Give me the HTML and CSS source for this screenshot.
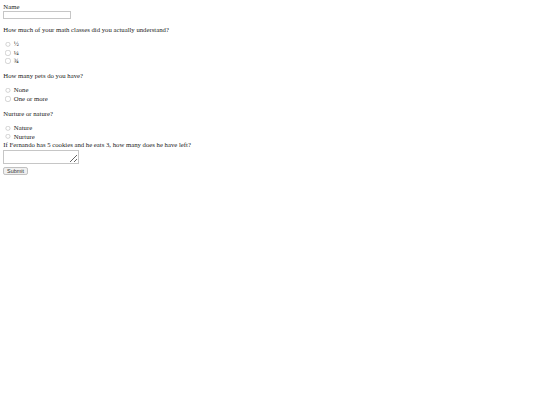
FILE: index.html
```html
<!DOCTYPE html>
<html>
<head>
<meta charset="utf-8">
<title>Quiz</title>
<link rel="stylesheet" href="styles.css">
</head>
<body class="page">
<form class="quiz">
  <label class="field-label" for="name">Name</label>
  <input class="text-input" type="text" id="name" name="name">
  <p class="question">How much of your math classes did you actually understand?</p>
  <label class="option"><input class="radio" type="radio" name="math" value="half"> ½</label>
  <label class="option"><input class="radio" type="radio" name="math" value="quarter"> ¼</label>
  <label class="option"><input class="radio" type="radio" name="math" value="three"> ¾</label>
  <p class="question">How many pets do you have?</p>
  <label class="option"><input class="radio" type="radio" name="pets" value="none"> None</label>
  <label class="option"><input class="radio" type="radio" name="pets" value="some"> One or more</label>
  <p class="question">Nurture or nature?</p>
  <label class="option"><input class="radio" type="radio" name="nn" value="nature"> Nature</label>
  <label class="option"><input class="radio" type="radio" name="nn" value="nurture"> Nurture</label>
  <label class="field-label" for="cookies">If Fernando has 5 cookies and he eats 3, how many does he have left?</label>
  <textarea class="answer" id="cookies" name="cookies"></textarea>
  <input class="submit" type="submit" value="Submit">
</form>
</body>
</html>
```
FILE: styles.css
```css
html, body { margin: 0; padding: 0; background: #fff; }
.page { overflow: hidden; }
.quiz {
  zoom: 0.42;
  padding: 8px;
  font-family: "Liberation Serif", "Times New Roman", serif;
  font-size: 16px;
  line-height: 18px;
  color: #222;
  display: flex;
  flex-direction: column;
  align-items: flex-start;
}
.field-label { display: block; }
.text-input {
  box-sizing: border-box;
  width: 160px;
  height: 20px;
  margin: 0;
  border: 2px solid #c6c6c6;
  background: #fff;
}
.question { margin: 16px 0; }
.option {
  display: block;
  height: 20px;
  line-height: 20px;
}
.radio { margin: 3px 3px 0 5px; vertical-align: -2px; opacity: 0.7; }
.answer {
  box-sizing: border-box;
  display: block;
  width: 181px;
  height: 34px;
  margin: 3px 0 0;
  border: 2px solid #c6c6c6;
  background: #fff;
}
.submit {
  box-sizing: border-box;
  width: 58px;
  height: 20px;
  margin: 7px 0 0;
  font-family: "Liberation Sans", Arial, sans-serif;
  font-size: 13px;
  color: #333;
  background: #f0f0f0;
  border: 2px solid #c0c0c0;
  border-radius: 5px;
}
```
